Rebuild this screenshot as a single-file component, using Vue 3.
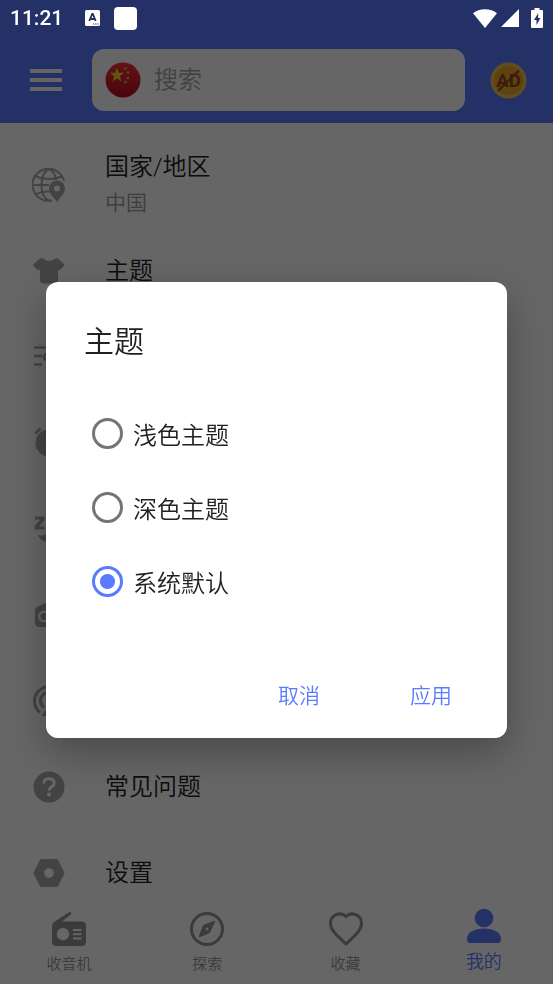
<script setup>
import { ref } from 'vue'

const theme = ref('system')
const themes = [
  { value: 'light', label: '浅色主题' },
  { value: 'dark', label: '深色主题' },
  { value: 'system', label: '系统默认' },
]

const rows = [
  { icon: 'globe', title: '国家/地区', detail: '中国' },
  { icon: 'shirt', title: '主题' },
  { icon: 'equalizer' },
  { icon: 'alarm' },
  { icon: 'sleep' },
  { icon: 'radio' },
  { icon: 'podcast' },
  { icon: 'help', title: '常见问题' },
  { icon: 'settings', title: '设置' },
]

const tabs = [
  { icon: 'radio', label: '收音机' },
  { icon: 'compass', label: '探索' },
  { icon: 'heart', label: '收藏' },
  { icon: 'person', label: '我的', active: true },
]
</script>

<template>
  <div class="app">
    <header class="top">
      <div class="status">
        <span class="clock">11:21</span>
        <svg class="status-a" viewBox="0 0 15 16">
          <rect width="15" height="16" rx="1.5" fill="#fff" />
          <path d="M4.3 11 7.2 4h.6l2.9 7M5.4 9h4.2" fill="none" stroke="#233166" stroke-width="1.8" />
          <path d="M8 14h1.3M10.2 14h1.3M12.4 14h1.3" stroke="#233166" stroke-width="1.2" />
        </svg>
        <span class="status-square"></span>
        <span class="spacer"></span>
        <svg class="wifi" viewBox="0 0 24 19"><path d="M0 4.2Q5 .2 12 .2T24 4.2L12 19Z" fill="#fff" /></svg>
        <svg class="signal" viewBox="0 0 18 18"><path d="M18 0v18H0Z" fill="#fff" /></svg>
        <svg class="battery" viewBox="0 0 12 20">
          <path d="M3.5 0h5v2H11q1 0 1 1v16q0 1-1 1H1q-1 0-1-1V3q0-1 1-1h2.500Z" fill="#fff" />
          <path d="M7.300 5 3 12h2.500v5L9.500 10H7Z" fill="#233166" />
        </svg>
      </div>
      <div class="toolbar">
        <button class="menu" type="button" aria-label="菜单">
          <svg viewBox="0 0 32 22"><path d="M0 2h32M0 11h32M0 20h32" stroke="#fff" stroke-width="4" /></svg>
        </button>
        <label class="search">
          <svg class="flag" viewBox="0 0 36 36">
            <defs>
              <linearGradient id="flagRed" x1="0" y1="0" x2="0" y2="1">
                <stop offset="0" stop-color="#f5303c" />
                <stop offset="1" stop-color="#b50d1c" />
              </linearGradient>
            </defs>
            <circle cx="18" cy="18" r="17.500" fill="url(#flagRed)" />
            <path d="M12 5.500 13.800 10.700 19.200 10.800 14.900 14.200 16.400 19.500 12 16.400 7.600 19.500 9.100 14.200 4.800 10.800 10.200 10.700Z" fill="#f5cf30" />
            <g fill="#e8b82c">
              <circle cx="20.500" cy="6.500" r="1.300" /><circle cx="23" cy="10.500" r="1.300" />
              <circle cx="23" cy="16" r="1.300" /><circle cx="20.500" cy="20" r="1.300" />
            </g>
          </svg>
          <input type="text" placeholder="搜索" aria-label="搜索" />
        </label>
        <button class="no-ads" type="button" aria-label="AD">
          <svg viewBox="0 0 38 38">
            <circle cx="19" cy="19" r="18.500" fill="#f0c050" />
            <circle cx="19" cy="19" r="15" fill="#e8a828" />
            <text x="19" y="26" text-anchor="middle" class="ad-text">AD</text>
            <path d="M8.500 29.500 30 8.500" stroke="#9a4520" stroke-width="2.200" />
          </svg>
        </button>
      </div>
    </header>

    <main class="list">
      <a v-for="row in rows" :key="row.icon" href="#" class="row">
        <svg class="row-icon" viewBox="0 0 34 34" fill="currentColor">
          <template v-if="row.icon === 'globe'">
            <g fill="none" stroke="currentColor" stroke-width="2">
              <path d="M32 13A16 16 0 1 0 20 32.400" />
              <path d="M18 33C12 31 9.500 24 9.500 17S12 3 17 1C22 3 23.500 8 24 12M4 8.500q13 5 26 0M1 17h16M4 26q6-3 14-2.500" />
            </g>
            <path d="M25 12.500a8 8 0 0 1 8 8c0 5-5 9-8 13.500-3-4.500-8-8.500-8-13.500a8 8 0 0 1 8-8Zm0 5a3 3 0 1 0 0 6 3 3 0 0 0 0-6Z" fill-rule="evenodd" />
          </template>
          <path v-else-if="row.icon === 'shirt'" d="M11 4.500q6 5 12 0 1.500-1 3 0l6 5.500q1 1 0 2l-3.500 3.500q-1 1-2 .5L26 15.500V26q0 3.500-3.500 3.500h-11Q8 29.500 8 26V15.500L7 16q-1 .5-2-.5L1.500 12q-1-1 0-2L8 4.500q1.500-1 3 0Z" />
          <g v-else-if="row.icon === 'equalizer'" fill="none" stroke="currentColor" stroke-width="2.500">
            <path d="M2 7.500h30M2 16h8M2 24.500h8M17 16h15M17 24.500h15" />
            <circle cx="15" cy="17" r="3" />
          </g>
          <g v-else-if="row.icon === 'alarm'">
            <circle cx="17" cy="17" r="13.500" />
            <path d="m3.500 7.500 5-5M30.500 7.500l-5-5" stroke="currentColor" stroke-width="3" />
          </g>
          <g v-else-if="row.icon === 'sleep'">
            <path d="M3 4.500h9.500V8L7 14.500h5.500v3H2.500V14L8.500 7.500H3ZM6 23c4 1 8 0 11-3l11 2c-3 10-18 11-22 1Z" />
          </g>
          <path v-else-if="row.icon === 'radio'" fill-rule="evenodd" d="m7 8 17-8 1 2.500L15 7.500h13q4 0 4 4V25q0 4-4 4H7q-4 0-4-4V13q0-4 4-5Zm5 4.500a6 6 0 1 0 0 12 6 6 0 0 0 0-12Zm0 2.500a3.500 3.500 0 1 1 0 7 3.500 3.500 0 0 1 0-7Z" />
          <g v-else-if="row.icon === 'podcast'" fill="none" stroke="currentColor" stroke-width="3">
            <path d="M8 28.500A14.500 14.500 0 1 1 26 28.500M12 23.500A8.500 8.500 0 1 1 22 23.500" />
            <path d="m17 20-7 12h14Z" fill="currentColor" stroke="none" />
          </g>
          <g v-else-if="row.icon === 'help'">
            <circle cx="17" cy="17" r="15.500" />
            <path d="M11.800 13.500q0-4.700 5.200-4.700t5.200 4.300c0 3.700-5.200 3.700-5.200 7.700" fill="none" stroke="#fff" stroke-width="3" />
            <circle cx="17" cy="24.500" r="2" fill="#fff" />
          </g>
          <path v-else fill-rule="evenodd" d="M9.500 3h15q1 0 1.500 1l6.200 12q.5 1 0 2L26 30q-.5 1-1.500 1h-15q-1 0-1.500-1L1.800 18q-.5-1 0-2L8 4q.5-1 1.500-1ZM17 12.200a4.800 4.800 0 1 0 0 9.600 4.800 4.800 0 0 0 0-9.600Z" />
        </svg>
        <span v-if="row.title" class="row-text">
          <span class="row-title">{{ row.title }}</span>
          <span v-if="row.detail" class="row-detail">{{ row.detail }}</span>
        </span>
      </a>
    </main>

    <nav class="tabs">
      <a v-for="tab in tabs" :key="tab.label" href="#" class="tab" :class="{ active: tab.active }">
        <svg class="tab-icon" viewBox="0 0 36 36" fill="currentColor">
          <path v-if="tab.icon === 'radio'" fill-rule="evenodd" d="M3 11 18 1.200q1.500-.7 2.200.6.500 1.200-.7 2L11 10.500h19.500q4.500 0 4.500 4.500v15.500q0 4.500-4.500 4.500h-25Q1 35 1 30.500V15q0-2.500 2-4Zm9 6a6.200 6.200 0 1 0 0 12.400A6.200 6.200 0 0 0 12 17Zm10 1v2h8.500v-2Zm0 4.200v2h8.500v-2Zm0 4.200v2h8.500v-2Z" />
          <template v-else-if="tab.icon === 'compass'">
            <circle cx="18" cy="18" r="15.500" fill="none" stroke="currentColor" stroke-width="3" />
            <path fill-rule="evenodd" d="m26 10-5.500 11.500L10 26l4.500-11.500ZM18 16a2 2 0 1 0 0 4 2 2 0 0 0 0-4Z" stroke="currentColor" stroke-width="1" stroke-linejoin="round" />
          </template>
          <path v-else-if="tab.icon === 'heart'" d="M18 33C11 26 2.500 20 2.500 12.500 2.500 3 13 .5 18 5.500c5-5 15.500-2.500 15.500 7C33.500 20 25 26 18 33Z" fill="none" stroke="currentColor" stroke-width="3" stroke-linejoin="round" />
          <template v-else>
            <circle cx="18" cy="10" r="9.300" />
            <path d="M1 31c0-7 8-10.500 17-10.500S35 24 35 31q0 4-3 4H4q-3 0-3-4Z" />
          </template>
        </svg>
        <span>{{ tab.label }}</span>
      </a>
    </nav>

    <div class="scrim">
      <form class="dialog" role="dialog" aria-labelledby="dialog-title" @submit.prevent>
        <h1 id="dialog-title">主题</h1>
        <div class="options">
          <label v-for="item in themes" :key="item.value" class="option">
            <input v-model="theme" type="radio" name="theme" :value="item.value" />
            <span>{{ item.label }}</span>
          </label>
        </div>
        <div class="actions">
          <button type="button">取消</button>
          <button type="submit">应用</button>
        </div>
      </form>
    </div>
  </div>
</template>

<style>
body {
  margin: 0;
}
</style>

<style scoped>
.app {
  height: 100vh;
  display: flex;
  flex-direction: column;
  background: #fff;
  color: #212121;
  font-family: Roboto, "Noto Sans CJK SC", sans-serif;
  font-weight: 350;
}
svg {
  display: block;
}
a {
  color: inherit;
  text-decoration: none;
}
button {
  flex: none;
  padding: 0;
  border: 0;
  background: none;
  font: inherit;
}
.top {
  background: #587bff;
}
.status {
  position: relative;
  z-index: 3;
  display: flex;
  align-items: center;
  height: 36px;
  padding: 0 10px;
  color: #fff;
}
.clock {
  width: 55px;
  font-size: 21px;
  font-weight: 500;
}
.status-a {
  width: 15px;
  height: 16px;
  margin-left: 20px;
}
.status-square {
  width: 23px;
  height: 23px;
  margin-left: 14px;
  border-radius: 4px;
  background: #fff;
}
.spacer {
  flex: 1;
}
.wifi {
  width: 24px;
  height: 19px;
}
.signal {
  width: 18px;
  height: 18px;
  margin: 0 12px 0 4px;
}
.battery {
  width: 12px;
  height: 20px;
}
.toolbar {
  display: flex;
  align-items: center;
  gap: 25px;
  padding: 13px 26px 12px 30px;
}
.menu {
  width: 32px;
  margin-right: 5px;
}
.search {
  flex: 1;
  min-width: 0;
  box-sizing: border-box;
  display: flex;
  align-items: center;
  gap: 13px;
  height: 62px;
  padding: 0 13px;
  border-radius: 12px;
  background: #fff;
}
.flag {
  flex: none;
  width: 36px;
  height: 36px;
}
.search input {
  flex: 1;
  min-width: 0;
  padding: 0;
  border: 0;
  outline: 0;
  background: none;
  font: inherit;
  font-size: 24px;
}
.search input::placeholder {
  color: #a4a4a4;
  opacity: 1;
}
.no-ads {
  width: 37px;
}
.ad-text {
  font: 700 19px Roboto, sans-serif;
  fill: #9a4520;
}
.list {
  flex: 1;
  min-height: 0;
  overflow: hidden;
  padding-top: 19px;
}
.row {
  display: flex;
  align-items: center;
  gap: 39px;
  height: 86px;
  padding-left: 32px;
}
.row-icon {
  width: 34px;
  height: 34px;
  color: #a8a8a8;
}
.row-text {
  display: flex;
  flex-direction: column;
}
.row-title {
  font-size: 24px;
  line-height: 36px;
}
.row-detail {
  font-size: 21px;
  line-height: 36px;
  color: #999;
}
.tabs {
  display: flex;
  height: 86px;
  border-top: 1px solid #f4f4f4;
}
.tab {
  flex: 1;
  display: flex;
  flex-direction: column;
  align-items: center;
  padding-top: 13px;
  color: #939393;
  font-size: 15px;
  line-height: 34px;
}
.tab-icon {
  width: 36px;
  height: 36px;
}
.tab.active {
  padding-top: 10px;
  color: #587bff;
  font-size: 18px;
  line-height: 36px;
}
.scrim {
  position: fixed;
  inset: 0;
  z-index: 2;
  display: flex;
  align-items: center;
  justify-content: center;
  padding: 36px 46px 0;
  background: rgba(0, 0, 0, 0.6);
}
.dialog {
  flex: 1;
  padding: 38px 32px 22px 38px;
  border-radius: 12px;
  background: #fff;
  box-shadow: 0 14px 40px rgba(0, 0, 0, 0.3);
}
h1 {
  margin: 0;
  font-size: 30px;
  font-weight: 350;
  line-height: 44px;
}
.options {
  padding: 32px 8px 54px;
}
.option {
  display: flex;
  align-items: center;
  gap: 10px;
  height: 74px;
  font-size: 24px;
}
.option input {
  appearance: none;
  width: 31px;
  height: 31px;
  margin: 0;
  border: 3px solid #757575;
  border-radius: 50%;
}
.option input:checked {
  border-color: #587bff;
  background: radial-gradient(circle, #587bff 7px, transparent 8px);
}
.actions {
  display: flex;
  justify-content: flex-end;
  gap: 44px;
}
.actions button {
  width: 88px;
  height: 44px;
  color: #587bff;
  font-size: 21px;
}
</style>
